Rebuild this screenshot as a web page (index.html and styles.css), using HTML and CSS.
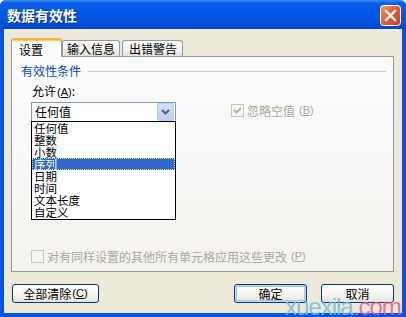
FILE: index.html
```html
<!doctype html>
<html>
	<head>
		<meta http-equiv="Content-Type" content="text/html;charset=UTF-8"/>
		<title>数据有效性</title>
		<link rel="stylesheet" href="styles.css">
	</head>
<body>
	<div class="window">
		<div class="titlebar">
			<span class="title">数据有效性</span>
			<a href="javascript:;" class="close">
				<svg width="21" height="21" viewBox="0 0 21 21">
					<defs>
						<linearGradient id="red" x1="0" y1="0" x2="1" y2="1">
							<stop offset="0" stop-color="#f09a7c"/>
							<stop offset="0.5" stop-color="#e05a30"/>
							<stop offset="1" stop-color="#c2421c"/>
						</linearGradient>
					</defs>
					<rect x="0.5" y="0.5" width="20" height="20" rx="3" fill="url(#red)" stroke="#fff"/>
					<path d="M6 6 L15 15 M15 6 L6 15" stroke="#fff" stroke-width="2.4" stroke-linecap="square"/>
				</svg>
			</a>
		</div>
		<div class="client">
			<div class="tabs">
				<span class="tab on">设置</span>
				<span class="tab">输入信息</span>
				<span class="tab third">出错警告</span>
			</div>
			<div class="panel">
				<div class="group"><span>有效性条件</span><i></i></div>
				<div class="row">
					<label class="label">允许<span class="key">(<u>A</u>)</span>:</label>
					<div class="combo">
						<span>任何值</span>
						<i class="drop">
							<svg width="9" height="6" viewBox="0 0 9 6"><path d="M1 1 L4.5 4.5 L8 1" fill="none" stroke="#4d6185" stroke-width="2"/></svg>
						</i>
						<ul class="list">
							<li>任何值</li>
							<li>整数</li>
							<li>小数</li>
							<li class="on">序列</li>
							<li>日期</li>
							<li>时间</li>
							<li>文本长度</li>
							<li>自定义</li>
						</ul>
					</div>
					<label class="check">
						<i class="box"><svg width="11" height="11" viewBox="0 0 11 11"><path d="M2 5 L4.5 7.5 L9 3" fill="none" stroke="#b1ae9e" stroke-width="1.8"/></svg></i>
						忽略空值<span class="key">(<u>B</u>)</span>
					</label>
				</div>
				<label class="check apply">
					<i class="box"></i>
					对有同样设置的其他所有单元格应用这些更改<span class="key">(<u>P</u>)</span>
				</label>
			</div>
			<div class="buttons">
				<a href="javascript:;" class="btn wide">全部清除<span class="key">(<u>C</u>)</span></a>
				<a href="javascript:;" class="btn default">确定</a>
				<a href="javascript:;" class="btn">取消</a>
			</div>
		</div>
		<div class="watermark">xuexila<em>.com</em></div>
	</div>
</body>
</html>
```

FILE: styles.css
```css
*{margin:0;padding:0;text-decoration:none;list-style:none;}
body{font-family:"Noto Sans CJK SC","Liberation Sans",sans-serif;font-size:12px;color:#000;background:#fff;}
u{text-decoration:underline;}

/*窗口*/
.window{width:406px;height:317px;display:flex;flex-direction:column;position:relative;overflow:hidden;background:#0754e4;border-radius:6px 6px 0 0;}
.titlebar{height:29px;display:flex;align-items:center;justify-content:space-between;padding:1px 5px 0 7px;box-sizing:border-box;background:linear-gradient(#3d8cf7 0,#0a5fe8 3px,#0058e6 12px,#0053df 22px,#0246c8 29px);}
.title{color:#fff;font-size:14px;font-weight:bold;line-height:16px;text-shadow:1px 1px 0 #0a2a8c;}
.close{display:block;width:21px;height:21px;}
.close svg{display:block;}
.client{flex:1;margin:0 4px 4px 4px;background:#ece9d8;padding:8px 8px 0 7px;display:flex;flex-direction:column;}

/*选项卡*/
.tabs{height:19px;display:flex;align-items:flex-end;}
.tab{height:15px;line-height:15px;padding:0 4px;border:1px solid #919b9c;border-bottom:none;border-radius:3px 3px 0 0;background:linear-gradient(#fefefe,#f0efea 70%,#e3e1d7);}
.tab.third{margin-left:2px;padding:0 5px 0 6px;}
.tab.on{height:17px;line-height:19px;padding:0 18px 0 7px;margin-bottom:-1px;position:relative;z-index:2;background:#fcfcfe;border-top:2px solid #f7b23c;box-shadow:inset 0 1px 0 #ffd15c;}

.panel{height:216px;box-sizing:border-box;border:1px solid #919b9c;background:linear-gradient(#fcfcfe,#f4f3ee);padding:7px 7px 8px 9px;display:flex;flex-direction:column;}
.group{display:flex;align-items:center;gap:7px;color:#0046d5;line-height:13px;}
.group i{flex:1;height:1px;background:#d0d0bf;margin-top:1px;}

.row{display:grid;grid-template-columns:145px auto;column-gap:55px;row-gap:3px;margin-top:7px;padding-left:10px;}
.label{line-height:13px;padding-left:1px;grid-column:1;}
.key{font-size:11px;font-family:"Liberation Sans",sans-serif;margin-left:1px;}

/*下拉框*/
.combo{grid-column:1;grid-row:2;height:20px;box-sizing:border-box;border:1px solid #7f9db9;background:#fff;position:relative;display:flex;align-items:center;padding-left:3px;}
.combo span{flex:1;line-height:16px;}
.drop{width:15px;height:16px;margin-right:1px;border:1px solid #b9ccf5;border-radius:2px;background:linear-gradient(#d3e1fc,#bccdf7);display:flex;align-items:center;justify-content:center;}
.drop svg{display:block;}
.list{position:absolute;top:18px;left:-1px;width:145px;box-sizing:border-box;border:1px solid #000;background:#fff;padding:0 0 1px 0;z-index:3;}
.list li{height:12px;line-height:12px;padding-left:2px;font-size:11.5px;}
.list li.on{background:#316ac5;color:#fff;outline:1px dotted #c6d4ee;outline-offset:-1px;}

/*复选框*/
.check{grid-row:2;grid-column:2;display:flex;align-items:center;gap:3px;color:#aca899;line-height:13px;margin-top:2px;height:13px;}
.box{width:13px;height:13px;box-sizing:border-box;border:1px solid #cac8bb;background:#f6f5f0;display:flex;align-items:center;justify-content:center;}
.box svg{display:block;}
.apply{margin-top:auto;margin-left:10px;}

/*按钮*/
.buttons{display:flex;gap:14px;margin-top:12px;padding-left:1px;}
.btn{height:19px;width:73px;box-sizing:border-box;border:1px solid #003c74;border-radius:3px;background:linear-gradient(#fff,#f4f4f0 60%,#e4e3da);color:#000;display:flex;align-items:center;justify-content:center;line-height:15px;}
.btn.wide{width:87px;margin-right:auto;}
.btn.default{box-shadow:inset 0 0 0 1px #c4d7f8,inset 0 0 0 2px #a8c2ef;}

.watermark{position:absolute;left:285px;bottom:0;font-family:"Liberation Sans",sans-serif;font-size:24px;line-height:20px;letter-spacing:-1px;color:rgba(112,188,224,0.85);z-index:5;}
.watermark em{font-style:normal;color:rgba(228,92,152,0.85);}
```
